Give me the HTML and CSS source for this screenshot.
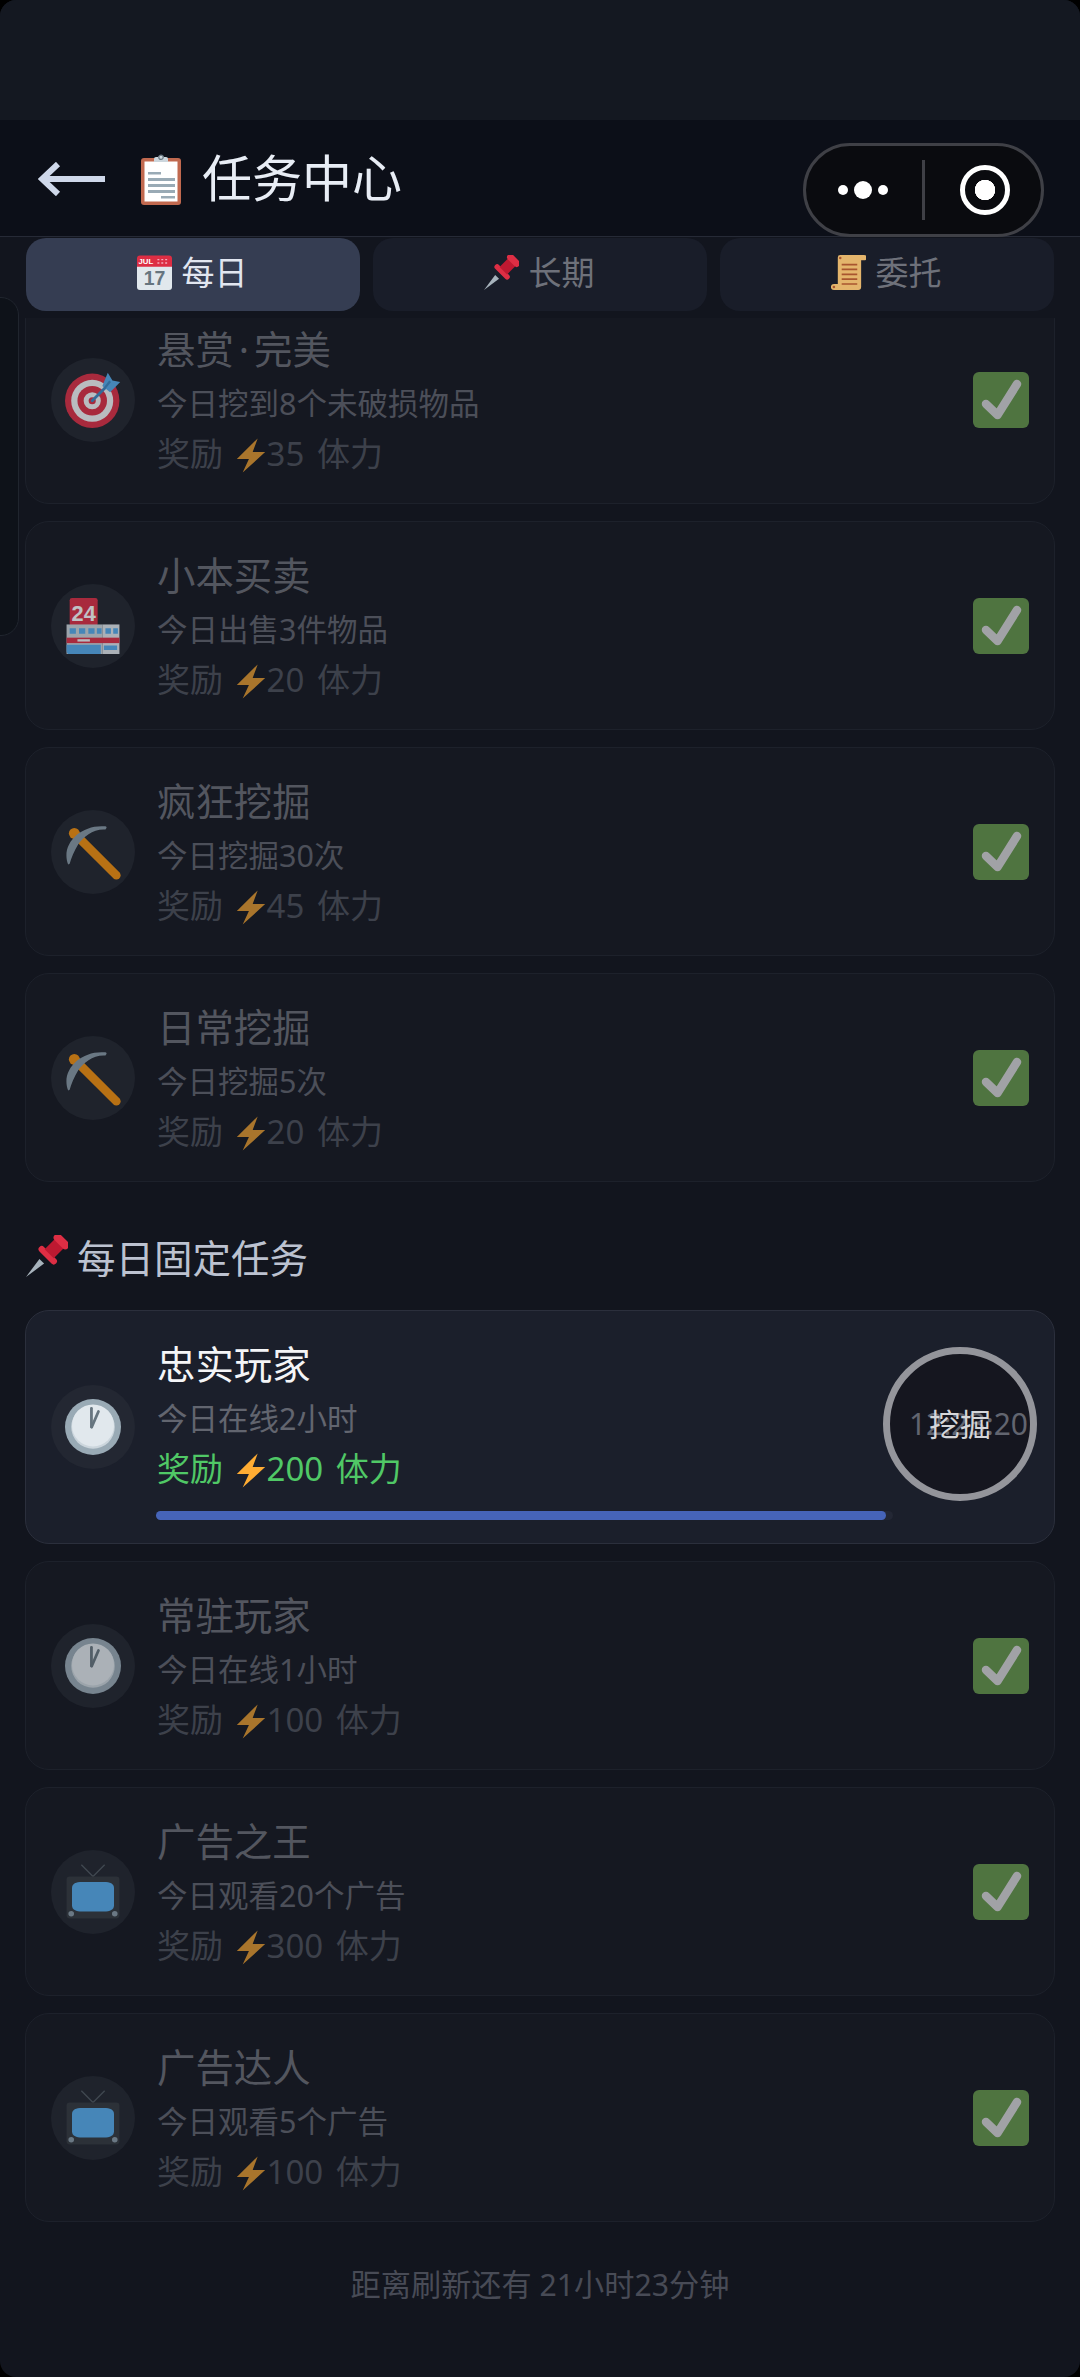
FILE: index.html
```html
<!DOCTYPE html>
<html lang="zh-CN">
<head>
<meta charset="utf-8">
<title>任务中心</title>
<link rel="stylesheet" href="styles.css">
</head>
<body>
<svg class="defs" xmlns="http://www.w3.org/2000/svg">
  <symbol id="i-clipboard" viewBox="0 0 40 52">
    <rect x="0" y="5" width="40" height="47" rx="3" fill="#C1694F"/>
    <rect x="3.500" y="8.500" width="33" height="40" fill="#fff"/>
    <path d="M13 9V6a2 2 0 0 1 2-2h2a3.400 3.400 0 0 1 6 0h2a2 2 0 0 1 2 2v3z" fill="#CCD6DD"/>
    <circle cx="20" cy="4.200" r="2.200" fill="none" stroke="#66757F" stroke-width="1.200"/>
    <path d="M7 19h13v2.600H7zM7 25h27v3H7zM7 31h27v3H7zM7 37h27v3H7zM20 43h14v2.600H20z" fill="#99AAB5"/>
  </symbol>
  <symbol id="i-pin" viewBox="0 0 36 36">
    <path d="M0 36 L11.500 20.500 L15.500 24.500 Z" fill="#A7B3BC"/>
    <g transform="rotate(45 22 14)">
      <rect x="12" y="16" width="20" height="5.500" rx="2.700" fill="#DD2E44"/>
      <rect x="16.500" y="4" width="11" height="13" fill="#BE1931"/>
      <rect x="14" y="-1.500" width="16" height="7" rx="3.200" fill="#DD2E44"/>
    </g>
  </symbol>
  <symbol id="i-scroll" viewBox="0 0 36 36">
    <path d="M7 2.500a2.500 2.500 0 0 1 2.500-2.500H34a2.500 2.500 0 0 1 0 5.500h-3V33a3 3 0 0 1-3 3H3a3 3 0 0 1 0-6.200h4z" fill="#E4B56C"/>
    <path d="M11 9h16v1.700H11zM11 14h16v1.700H11zM11 19h16v1.700H11zM11 24h16v1.700H11zM11 29h16v1.700H11z" fill="#A8552F"/>
    <circle cx="9.500" cy="3" r="1.300" fill="#A8552F"/>
    <circle cx="3" cy="33" r="1.300" fill="#A8552F"/>
  </symbol>
  <symbol id="i-target" viewBox="0 0 36 36">
    <circle cx="17.500" cy="18.500" r="17.500" fill="#DD2E44"/>
    <circle cx="17.500" cy="18.500" r="13.500" fill="#F5F8FA"/>
    <circle cx="17.500" cy="18.500" r="9.500" fill="#DD2E44"/>
    <circle cx="17.500" cy="18.500" r="5.500" fill="#F5F8FA"/>
    <circle cx="17.500" cy="18.500" r="2.300" fill="#DD2E44"/>
    <path d="M17.500 18.500L27 9" stroke="#3B88C3" stroke-width="1.800" stroke-linecap="round"/>
    <path d="M24 9L27.500 0.500 30.500 5.500 35.500 6.500 29 13z" fill="#55ACEE"/>
    <path d="M25 11l4-5" stroke="#3B88C3" stroke-width="1.500"/>
  </symbol>
  <symbol id="i-pick" viewBox="0 0 36 36">
    <path d="M7 7L33 33" stroke="#F4900C" stroke-width="5.500" stroke-linecap="round"/>
    <circle cx="6" cy="6" r="3.500" fill="#F4900C"/>
    <path d="M2 26C-3 13 10 0 26 1.500 27 2 27 2.500 26 3.500 18 3 12 8 8.500 13 6 17 4 22 3 25.500z" fill="#8899A6"/>
  </symbol>
  <symbol id="i-clock" viewBox="0 0 36 36">
    <circle cx="18" cy="18" r="18" fill="#99AAB5"/>
    <circle cx="18" cy="18" r="14" fill="#CCD6DD"/>
    <circle cx="18" cy="17" r="13.500" fill="#E1E8ED"/>
    <path d="M17 18V6" stroke="#66757F" stroke-width="1.800" stroke-linecap="round"/>
    <path d="M17.200 18L21.500 8" stroke="#66757F" stroke-width="1.800" stroke-linecap="round"/>
  </symbol>
  <symbol id="i-tv" viewBox="0 0 36 36">
    <path d="M10.500 0.500L18 8 25.500 0.500" fill="none" stroke="#4d565e" stroke-width="0.900"/>
    <rect x="1" y="8" width="34" height="27" rx="2" fill="#31373D"/>
    <path d="M11 11.500h14c4 0 6.500 1 6.500 4v11c0 3-2.500 4-6.500 4H11c-4 0-6.500-1-6.500-4v-11c0-3 2.500-4 6.500-4z" fill="#55ACEE"/>
    <circle cx="4" cy="32" r="1.800" fill="#8899A6"/>
    <circle cx="32" cy="32" r="1.800" fill="#8899A6"/>
  </symbol>
  <symbol id="i-bolt" viewBox="0 0 36 36" preserveAspectRatio="none">
    <path d="M26 0.500L1 21.500H15.500L8 35.500 35 14.500H20z" fill="#FFAC33"/>
  </symbol>
  <symbol id="i-check" viewBox="0 0 56 56">
    <rect width="56" height="56" rx="6" fill="#77B255"/>
    <path d="M13 32L24.500 43 44 12" fill="none" stroke="#FFF" stroke-width="8.500" stroke-linecap="round" stroke-linejoin="round"/>
  </symbol>
</svg>

<div class="app">
  <div class="side-panel"></div>
  <div class="status"></div>
  <header class="nav">
    <svg class="back" viewBox="0 0 68 34"><path d="M67 17H4M20 2L4 17 20 32" fill="none" stroke="#CFD8EA" stroke-width="6"/></svg>
    <svg class="nav-emoji"><use href="#i-clipboard"/></svg>
    <h1 class="nav-title">任务中心</h1>
    <div class="capsule">
      <div class="dots"><span class="dot"></span><span class="dot big"></span><span class="dot"></span></div>
      <span class="cap-line"></span>
      <span class="cap-target"></span>
    </div>
  </header>
  <nav class="tabs">
    <div class="tab active">
      <svg class="tab-emoji" viewBox="0 0 36 36">
        <path d="M0 10h36v23a3 3 0 0 1-3 3H3a3 3 0 0 1-3-3z" fill="#E1E8ED"/>
        <path d="M3 0.500h30a3 3 0 0 1 3 3V12H0V3.500a3 3 0 0 1 3-3z" fill="#DD2E44"/>
        <text x="1.500" y="9.500" class="cal-m">JUL</text>
        <path d="M21 4h2v1.500h-2zM25 4h2v1.500h-2zM29 4h2v1.500h-2zM21 7.500h2V9h-2zM25 7.500h2V9h-2zM29 7.500h2V9h-2z" fill="#F4ABBA"/>
        <text x="18" y="31" class="cal-d">17</text>
      </svg><span class="tab-text">每日</span></div>
    <div class="tab"><svg class="tab-emoji"><use href="#i-pin"/></svg><span class="tab-text">长期</span></div>
    <div class="tab"><svg class="tab-emoji"><use href="#i-scroll"/></svg><span class="tab-text">委托</span></div>
  </nav>
  <main class="list">
    <article class="card done first">
      <div class="icon"><svg class="emoji"><use href="#i-target"/></svg></div>
      <div class="info">
        <div class="name">悬赏<span class="mid">·</span>完美</div>
        <div class="desc">今日挖到8个未破损物品</div>
        <div class="reward">奖励 <svg class="bolt"><use href="#i-bolt"/></svg>35 体力</div>
      </div>
      <svg class="check"><use href="#i-check"/></svg>
    </article>
    <article class="card done">
      <div class="icon">
        <svg class="emoji" viewBox="0 0 36 36">
          <rect x="3" y="0" width="18" height="18" rx="1.500" fill="#DD2E44"/>
          <text x="12" y="14.500" class="store-n">24</text>
          <rect x="1" y="17" width="23" height="19" fill="#CCD6DD"/>
          <rect x="24" y="17" width="11" height="19" fill="#E1E8ED"/>
          <path d="M3 19.500h4v3.500H3zM9 19.500h4v3.500H9zM15 19.500h4v3.500h-4zM20.500 19.500h3v3.500h-3zM26 19.500h3.500v3.500H26zM31 19.500h3v3.500h-3z" fill="#55ACEE"/>
          <rect x="1" y="25.500" width="34" height="3.500" fill="#DD2E44"/>
          <rect x="8" y="26.500" width="8" height="1.500" fill="#F5F8FA"/>
          <path d="M1 30h22v6H3a2 2 0 0 1-2-2zM25 30.500h8.500v3H25z" fill="#55ACEE"/>
        </svg>
      </div>
      <div class="info">
        <div class="name">小本买卖</div>
        <div class="desc">今日出售3件物品</div>
        <div class="reward">奖励 <svg class="bolt"><use href="#i-bolt"/></svg>20 体力</div>
      </div>
      <svg class="check"><use href="#i-check"/></svg>
    </article>
    <article class="card done">
      <div class="icon"><svg class="emoji"><use href="#i-pick"/></svg></div>
      <div class="info">
        <div class="name">疯狂挖掘</div>
        <div class="desc">今日挖掘30次</div>
        <div class="reward">奖励 <svg class="bolt"><use href="#i-bolt"/></svg>45 体力</div>
      </div>
      <svg class="check"><use href="#i-check"/></svg>
    </article>
    <article class="card done">
      <div class="icon"><svg class="emoji"><use href="#i-pick"/></svg></div>
      <div class="info">
        <div class="name">日常挖掘</div>
        <div class="desc">今日挖掘5次</div>
        <div class="reward">奖励 <svg class="bolt"><use href="#i-bolt"/></svg>20 体力</div>
      </div>
      <svg class="check"><use href="#i-check"/></svg>
    </article>

    <h2 class="section"><svg class="section-emoji"><use href="#i-pin"/></svg>每日固定任务</h2>

    <article class="card live">
      <div class="icon"><svg class="emoji"><use href="#i-clock"/></svg></div>
      <div class="info">
        <div class="name">忠实玩家</div>
        <div class="desc">今日在线2小时</div>
        <div class="reward">奖励 <svg class="bolt"><use href="#i-bolt"/></svg>200 体力</div>
        <div class="track"><div class="fill" style="width:99%"></div></div>
      </div>
      <div class="dig">
        <span class="dig-time">12:23:20</span>
        <span class="dig-label">挖掘</span>
      </div>
    </article>
    <article class="card done">
      <div class="icon"><svg class="emoji"><use href="#i-clock"/></svg></div>
      <div class="info">
        <div class="name">常驻玩家</div>
        <div class="desc">今日在线1小时</div>
        <div class="reward">奖励 <svg class="bolt"><use href="#i-bolt"/></svg>100 体力</div>
      </div>
      <svg class="check"><use href="#i-check"/></svg>
    </article>
    <article class="card done">
      <div class="icon"><svg class="emoji"><use href="#i-tv"/></svg></div>
      <div class="info">
        <div class="name">广告之王</div>
        <div class="desc">今日观看20个广告</div>
        <div class="reward">奖励 <svg class="bolt"><use href="#i-bolt"/></svg>300 体力</div>
      </div>
      <svg class="check"><use href="#i-check"/></svg>
    </article>
    <article class="card done">
      <div class="icon"><svg class="emoji"><use href="#i-tv"/></svg></div>
      <div class="info">
        <div class="name">广告达人</div>
        <div class="desc">今日观看5个广告</div>
        <div class="reward">奖励 <svg class="bolt"><use href="#i-bolt"/></svg>100 体力</div>
      </div>
      <svg class="check"><use href="#i-check"/></svg>
    </article>
    <footer class="refresh">距离刷新还有 21小时23分钟</footer>
  </main>
</div>
</body>
</html>
```

FILE: styles.css
```css
* { box-sizing: border-box; margin: 0; padding: 0; }
html, body { width: 1080px; height: 2377px; background: #000; overflow: hidden; }
body { font-family: "Noto Sans", "Noto Sans CJK SC", sans-serif; }
.defs { position: absolute; width: 0; height: 0; }
.cal-m { font: 700 8px "Liberation Sans", sans-serif; fill: #fff; }
.cal-d { font: 700 20px "Liberation Sans", sans-serif; fill: #66757F; text-anchor: middle; }
.store-n { font: 700 14px "Liberation Sans", sans-serif; fill: #fff; text-anchor: middle; }

.app {
  position: relative;
  width: 1080px;
  height: 2377px;
  background: #12151e;
  border-radius: 16px;
  overflow: hidden;
  display: flex;
  flex-direction: column;
}
.side-panel {
  position: absolute;
  left: -2px;
  top: 297px;
  width: 21px;
  height: 339px;
  background: #0e1219;
  border: 1px solid #20252e;
  border-radius: 0 18px 18px 0;
  z-index: 3;
}
.status { height: 120px; background: #141821; flex: none; }

.nav {
  position: relative;
  height: 117px;
  flex: none;
  display: flex;
  align-items: center;
  padding: 0 0 0 38px;
  background: #0c0f18;
  border-bottom: 1px solid #262a36;
  z-index: 3;
}
.back { width: 68px; height: 34px; flex: none; margin-top: 2px; }
.nav-emoji { width: 40px; height: 52px; flex: none; margin: 2px 0 0 35px; }
.nav-title {
  margin-left: 21px;
  font-size: 50px;
  font-weight: 400;
  line-height: 70px;
  color: #e8edf5;
}
.capsule {
  position: absolute;
  left: 803px;
  top: 23px;
  width: 241px;
  height: 94px;
  background: #0a0b0f;
  border: 3px solid #3f4046;
  border-radius: 47px;
  display: flex;
  align-items: center;
}
.dots { display: flex; align-items: center; gap: 6px; margin-left: 32px; width: 50px; }
.dot { width: 10px; height: 10px; border-radius: 50%; background: #fff; flex: none; }
.dot.big { width: 18px; height: 18px; }
.cap-line { width: 3px; height: 60px; background: #3f4046; margin-left: 34px; flex: none; }
.cap-target {
  width: 50px;
  height: 50px;
  margin-left: 35px;
  flex: none;
  border: 5px solid #fff;
  border-radius: 50%;
  background: radial-gradient(circle, #fff 0 10px, transparent 10.5px);
}

.tabs {
  flex: none;
  height: 81px;
  padding: 1px 26px 0;
  display: flex;
  gap: 13px;
  align-items: flex-start;
  background: #12151e;
  position: relative;
  z-index: 2;
}
.tab {
  flex: 1;
  height: 73px;
  padding: 0 2px 5px 0;
  border-radius: 20px;
  background: #191d29;
  color: #6e717a;
  font-size: 33px;
  display: flex;
  align-items: center;
  justify-content: center;
  gap: 10px;
}
.tab.active { background: #353d52; color: #e1e6f0; }
.tab-emoji { width: 35px; height: 35px; flex: none; }
.tab-text { padding-bottom: 3px; }

.list {
  flex: 1;
  min-height: 0;
  overflow: hidden;
  padding: 0 25px;
  display: flex;
  flex-direction: column;
  gap: 17px;
}
.card {
  position: relative;
  flex: none;
  height: 209px;
  border: 1px solid #1d212b;
  border-radius: 24px;
  background: #151821;
  display: flex;
  align-items: center;
  padding: 0 25px;
}
.card.first { margin-top: -23px; }
.card.live { height: 234px; background: #1b1f2b; border-color: #2b2f3c; }
.icon {
  width: 84px;
  height: 84px;
  flex: none;
  border-radius: 50%;
  background: #1f232c;
  display: flex;
  align-items: center;
  justify-content: center;
}
.live .icon { background: #232732; }
.emoji { width: 56px; height: 56px; flex: none; }
.done .emoji { opacity: .72; }
.info { flex: 1; margin-left: 22px; align-self: flex-start; padding-top: 26px; min-width: 0; }
.name { font-size: 38.4px; line-height: 55px; color: #53565f; }
.mid { margin: 0 5px; }
.desc { font-size: 30.5px; line-height: 52px; color: #4c4f59; }
.reward { font-size: 33px; line-height: 50px; word-spacing: 4px; color: #3d414b; white-space: nowrap; }
.bolt { width: 30px; height: 35px; vertical-align: -7px; margin: 0 1px 0 0; }
.done .bolt { opacity: .63; }
.live .name { color: #f4f5f7; }
.live .desc { color: #62656f; }
.live .reward { color: #50c866; }
.check { width: 56px; height: 56px; flex: none; opacity: .6; }

.track {
  width: 737px;
  height: 9px;
  margin-top: 17px;
  margin-left: -1px;
  border-radius: 5px;
  background: #232734;
}
.fill { height: 100%; border-radius: 5px; background: #4664b8; }

.dig {
  position: absolute;
  right: 17px;
  top: 36px;
  width: 154px;
  height: 154px;
  border-radius: 50%;
  border: 7px solid #94959b;
  background: #15161f;
}
.dig-time {
  position: absolute;
  right: 2px;
  top: 50%;
  transform: translateY(-50%);
  font-size: 30px;
  line-height: 40px;
  color: #62656f;
  white-space: nowrap;
}
.dig-label {
  position: absolute;
  left: 0;
  right: 0;
  top: 50%;
  transform: translateY(-50%);
  text-align: center;
  font-size: 31px;
  line-height: 40px;
  color: #d5d6d9;
}

.section {
  display: flex;
  align-items: center;
  gap: 9px;
  height: 54px;
  margin: 31px 0 9px;
  padding: 0 0 3px 1px;
  font-size: 38.5px;
  font-weight: 400;
  color: #bcc2d0;
}
.section-emoji { width: 42px; height: 42px; flex: none; }
.refresh {
  margin-top: 25px;
  text-align: center;
  font-size: 30.2px;
  line-height: 42px;
  color: #484b56;
}
```
